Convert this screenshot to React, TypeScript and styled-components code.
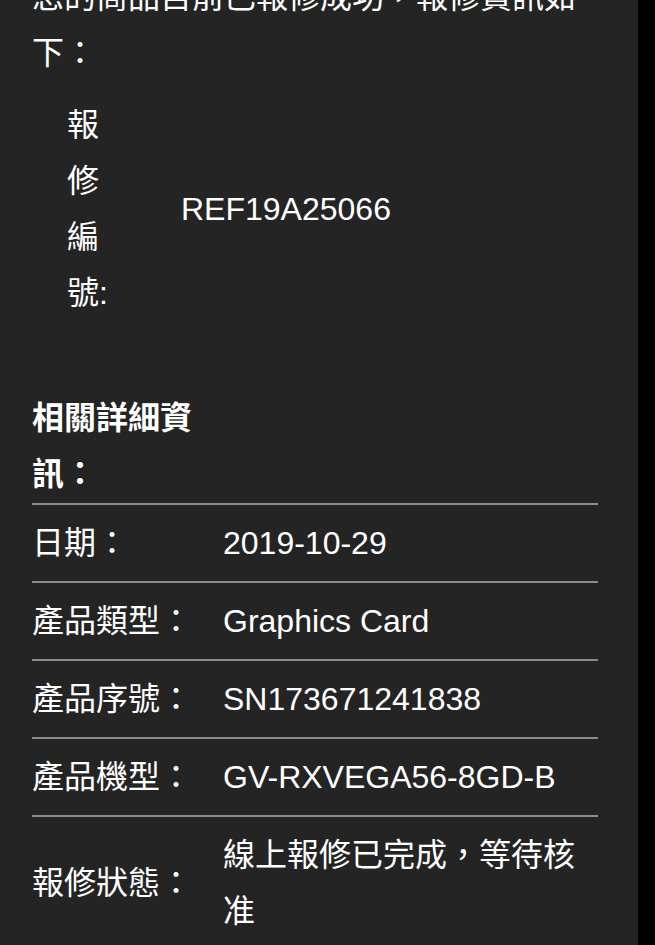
import React from "react";
import styled, { createGlobalStyle } from "styled-components";

const GlobalStyle = createGlobalStyle`
  html, body {
    margin: 0;
    padding: 0;
    background: #000;
  }
  body {
    font-family: "Liberation Sans", "Noto Sans CJK TC", sans-serif;
    color: #fff;
    overflow: hidden;
  }
`;

const Panel = styled.main`
  width: 638px;
  min-height: 945px;
  box-sizing: border-box;
  background: #242424;
  padding: 0 40px 0 32px;
  font-size: 32px;
  line-height: 56px;
  overflow: hidden;
`;

const Intro = styled.p`
  margin: -31px 0 0;
  color: #fff;
`;

const RepairTable = styled.div`
  margin-top: 16px;
  display: grid;
  grid-template-columns: 44px 1fr;
  column-gap: 70px;
  align-items: center;
  padding-left: 35px;
`;

const RepairLabel = styled.div`
  word-break: break-all;
`;

const RepairValue = styled.div`
  white-space: nowrap;
`;

const Heading = styled.h3`
  margin: 69px 0 0;
  width: 170px;
  font-size: 32px;
  font-weight: 700;
  line-height: 56px;
`;

const DetailTable = styled.div`
  margin-top: 1px;
  border-top: 2px solid #8a8a8a;
`;

const Row = styled.div`
  display: grid;
  grid-template-columns: 191px 1fr;
  align-items: center;
  padding: 10px 0;
  border-bottom: 2px solid #8a8a8a;
`;

const Label = styled.div`
  white-space: nowrap;
`;

const Value = styled.div``;

const details: [string, string][] = [
  ["日期：", "2019-10-29"],
  ["產品類型：", "Graphics Card"],
  ["產品序號：", "SN173671241838"],
  ["產品機型：", "GV-RXVEGA56-8GD-B"],
  ["報修狀態：", "線上報修已完成，等待核准"],
];

export default function App() {
  return (
    <>
      <GlobalStyle />
      <Panel>
        <Intro>您的商品目前已報修成功，報修資訊如下：</Intro>
        <RepairTable>
          <RepairLabel>報修編號:</RepairLabel>
          <RepairValue>REF19A25066</RepairValue>
        </RepairTable>
        <Heading>相關詳細資訊：</Heading>
        <DetailTable>
          {details.map(([label, value]) => (
            <Row key={label}>
              <Label>{label}</Label>
              <Value>{value}</Value>
            </Row>
          ))}
        </DetailTable>
      </Panel>
    </>
  );
}
